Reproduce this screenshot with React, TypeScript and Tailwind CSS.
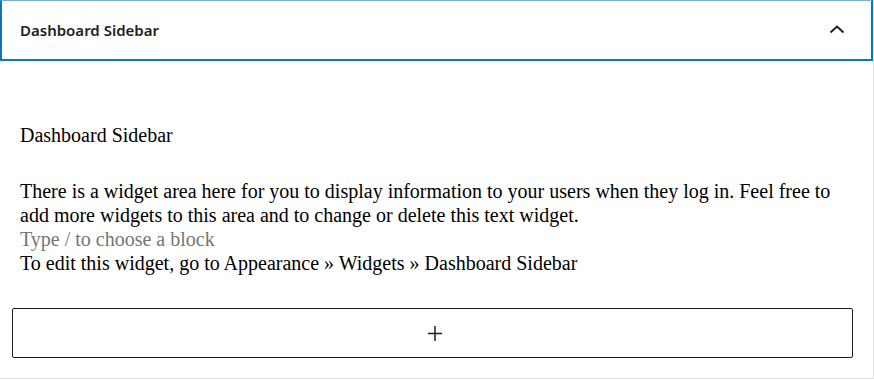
export default function App() {
  return (
    <div className="w-[874px] h-[380px] bg-white">
      <div className="w-[874px] border-r border-b border-[#e0e0e0] bg-white">
        {/* Panel header (focused) */}
        <button className="w-[873px] h-[61px] flex items-center justify-between pl-[18px] pr-[26px] border-t border-t-[#72aee6] border-l-2 border-r-2 border-b-2 border-[#007cba] bg-white text-left">
          <span className="text-[15px] font-semibold text-[#1e1e1e] font-['Noto_Sans',sans-serif]">Dashboard Sidebar</span>
          <svg width="16" height="10" viewBox="0 0 16 10" className="text-[#1e1e1e] -mt-[3px]">
            <polyline points="1.5,8.5 8,2.5 14.5,8.5" fill="none" stroke="currentColor" strokeWidth="2" />
          </svg>
        </button>

        <div className="px-[12px] pt-[62px] pb-[20px] font-['Liberation_Serif',serif] text-[20px] leading-[24px] text-black">
          <div className="px-[8px]">
            <p>Dashboard Sidebar</p>
            <p className="mt-[32px]">
              There is a widget area here for you to display information to your users when they log in. Feel free to add more widgets to this area and to change or delete this text widget.
            </p>
            <p className="text-[#757575]">Type / to choose a block</p>
            <p>To edit this widget, go to Appearance » Widgets » Dashboard Sidebar</p>
          </div>
          <button className="mt-[33px] w-[841px] h-[50px] border border-[#1e1e1e] rounded-[2px] flex items-center justify-center bg-white pl-[4px]">
            <svg width="24" height="24" viewBox="0 0 24 24" className="text-[#1e1e1e]">
              <path d="M11.25 5h1.5v15h-1.5z M5 11.75h14v1.5H5z" fill="currentColor" />
            </svg>
          </button>
        </div>
      </div>
    </div>
  );
}
